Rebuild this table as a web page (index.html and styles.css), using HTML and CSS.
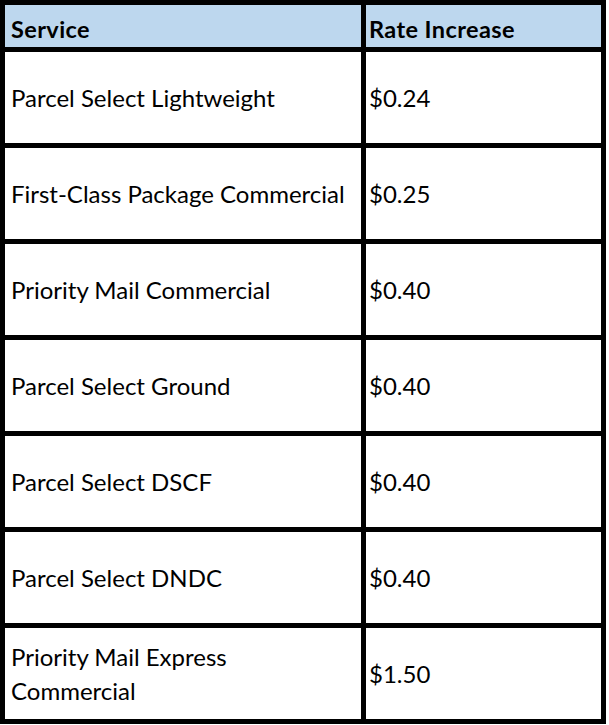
FILE: index.html
```html
<!DOCTYPE html>
<html>
<head>
<meta charset="utf-8">
<link rel="stylesheet" href="styles.css">
</head>
<body>
<div class="rates">
  <div class="cell head first">Service</div>
  <div class="cell head second">Rate Increase</div>

  <div class="cell first">Parcel Select Lightweight</div>
  <div class="cell second">$0.24</div>

  <div class="cell first">First-Class Package Commercial</div>
  <div class="cell second">$0.25</div>

  <div class="cell first">Priority Mail Commercial</div>
  <div class="cell second">$0.40</div>

  <div class="cell first">Parcel Select Ground</div>
  <div class="cell second">$0.40</div>

  <div class="cell first">Parcel Select DSCF</div>
  <div class="cell second">$0.40</div>

  <div class="cell first">Parcel Select DNDC</div>
  <div class="cell second">$0.40</div>

  <div class="cell first">Priority Mail Express<br>Commercial</div>
  <div class="cell second">$1.50</div>
</div>
</body>
</html>
```

FILE: styles.css
```css
html, body {
  margin: 0;
  padding: 0;
  background: #ffffff;
}

.rates {
  width: 606px;
  box-sizing: border-box;
  display: grid;
  grid-template-columns: 356px 235px;
  grid-template-rows: 42px repeat(7, 91px);
  gap: 5px;
  padding: 5px 5px 5px 5px;
  background: #000000;
  font-family: Lato, "Open Sans", sans-serif;
  font-size: 24px;
  line-height: 34px;
  color: #000000;
}

.cell {
  background: #ffffff;
  display: flex;
  align-items: center;
}

.cell.first {
  padding-left: 6px;
}

.cell.second {
  padding-left: 3px;
}

.cell.head {
  background: #bdd7ee;
  font-weight: 700;
  font-size: 23.5px;
  letter-spacing: 0.4px;
  padding-top: 5px;
  box-sizing: border-box;
}
```
